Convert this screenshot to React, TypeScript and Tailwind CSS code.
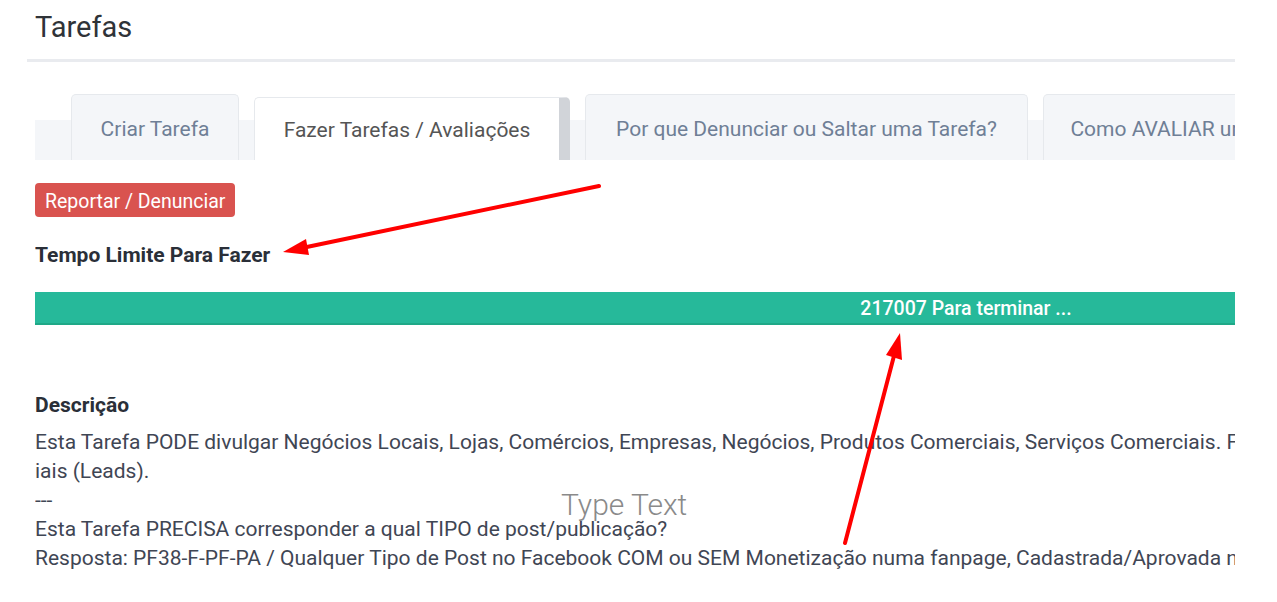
import React from 'react';

const tabs = [
  { label: 'Criar Tarefa', width: 'w-[168px]', active: false },
  { label: 'Fazer Tarefas / Avaliações', width: 'w-[316px]', active: true },
  { label: 'Por que Denunciar ou Saltar uma Tarefa?', width: 'w-[443px]', active: false },
  { label: 'Como AVALIAR uma Tarefa?', width: 'w-[320px]', active: false },
];

function Tabs() {
  return (
    <div className="flex items-end gap-[15px] pl-[36px] h-[66px] bg-[linear-gradient(to_bottom,transparent_26px,#f4f6f9_26px)]">
      {tabs.map((t) =>
        t.active ? (
          <div
            key={t.label}
            className={`${t.width} h-[63px] shrink-0 bg-white border border-[#e6e9ed] border-b-0 border-r-[11px] border-r-[#d1d4d9] rounded-t-[5px] flex items-center justify-center pt-[4px] text-[21px] text-[#555]`}
          >
            {t.label}
          </div>
        ) : (
          <div
            key={t.label}
            className={`${t.width} h-[66px] shrink-0 bg-[#f4f6f9] border border-[#e6e9ed] border-b-0 rounded-t-[5px] flex items-center justify-center pt-[4px] text-[21px] text-[#6f7f96]`}
          >
            {t.label}
          </div>
        )
      )}
    </div>
  );
}

export default function App() {
  return (
    <div className="relative w-[1277px] h-[602px] bg-white overflow-hidden font-['Roboto',_'Liberation_Sans',_sans-serif]">
      <div className="pl-[35px] pt-[9px] h-[59px] text-[29px] leading-[36px] text-[#2f3338]">Tarefas</div>
      <div className="ml-[27px] w-[1208px] h-[3px] bg-[#e9ebef]" />

      <div className="ml-[35px] w-[1200px] overflow-hidden mt-[32px]">
        <div className="w-[1862px]">
          <Tabs />

          <div className="mt-[23px]">
            <span className="inline-flex items-center h-[34px] px-[10px] pt-[3px] rounded-[4px] bg-[#d9534f] text-white text-[19.5px]">
              Reportar / Denunciar
            </span>
          </div>

          <div className="mt-[23px] text-[21px] leading-[30px] font-bold text-[#2a2f38]">Tempo Limite Para Fazer</div>

          <div className="mt-[22px] h-[33px] pt-[3px] bg-[#26b99a] border-b-2 border-[#1fa887] flex items-center justify-center text-white text-[19.5px] font-medium">
            217007 Para terminar ...
          </div>

          <div className="mt-[66px] text-[21px] leading-[29px] font-bold text-[#2a2f38]">Descrição</div>
          <div className="mt-[8px] text-[21px] leading-[29px] text-[#3f4654] whitespace-nowrap">
            <div>
              Esta Tarefa PODE divulgar Negócios Locais, Lojas, Comércios, Empresas, Negócios, Produtos Comerciais, Serviços Comerciais. Formulários de Cadastros e Contatos Comerc
            </div>
            <div>iais (Leads).</div>
            <div>---</div>
            <div>Esta Tarefa PRECISA corresponder a qual TIPO de post/publicação?</div>
            <div>
              Resposta: PF38-F-PF-PA / Qualquer Tipo de Post no Facebook COM ou SEM Monetização numa fanpage, Cadastrada/Aprovada no site.
            </div>
          </div>
        </div>
      </div>

      <div className="absolute left-[561px] top-[487px] text-[30px] leading-[36px] font-light text-[#8a8a8a]">Type Text</div>

      <svg className="absolute inset-0 pointer-events-none" width="1277" height="602" viewBox="0 0 1277 602">
        <line x1="599" y1="186" x2="302" y2="248" stroke="#ff0000" strokeWidth="4" strokeLinecap="round" />
        <polygon points="283,252 309,255 306,239" fill="#ff0000" />
        <line x1="845" y1="543" x2="895" y2="352" stroke="#ff0000" strokeWidth="4" strokeLinecap="round" />
        <polygon points="900,333 902,360 886,355" fill="#ff0000" />
      </svg>
    </div>
  );
}
